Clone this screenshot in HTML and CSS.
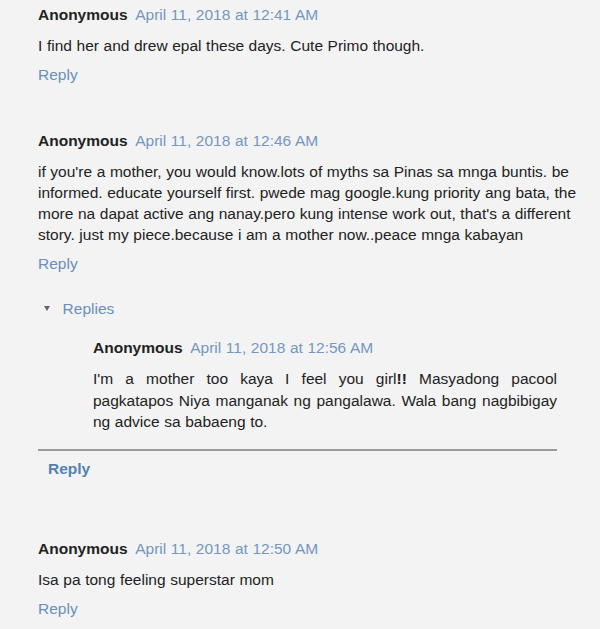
FILE: index.html
```html
<!DOCTYPE html>
<html lang="en">

<head>
  <title>Comments</title>
  <meta charset="utf-8">
  <meta name="viewport" content="width=device-width, initial-scale=1">
  <link rel="stylesheet" href="styles.css">
</head>

<body>
  <div class="comments">
    <!-- First comment -->
    <div class="comment">
      <div class="comment-header">
        <span class="author">Anonymous</span>
        <a class="date" href="#">April 11, 2018 at 12:41 AM</a>
      </div>
      <p class="comment-body">I find her and drew epal these days. Cute Primo though.</p>
      <a class="reply" href="#">Reply</a>
    </div>

    <!-- Second comment, with a thread -->
    <div class="comment second">
      <div class="comment-header">
        <span class="author">Anonymous</span>
        <a class="date" href="#">April 11, 2018 at 12:46 AM</a>
      </div>
      <p class="comment-body">if you're a mother, you would know.lots of myths sa Pinas sa mnga buntis. be informed. educate yourself first. pwede mag google.kung priority ang bata, the more na dapat active ang nanay.pero kung intense work out, that's a different story. just my piece.because i am a mother now..peace mnga kabayan</p>
      <a class="reply" href="#">Reply</a>
    </div>

    <div class="thread">
      <div class="toggle">
        <span class="arrow"></span>
        <a href="#">Replies</a>
      </div>
      <div class="replies">
        <div class="comment nested">
          <div class="comment-header">
            <span class="author">Anonymous</span>
            <a class="date" href="#">April 11, 2018 at 12:56 AM</a>
          </div>
          <p class="comment-body">I'm a mother too kaya I feel you girl<b>!!</b> Masyadong pacool pagkatapos Niya manganak ng pangalawa. Wala bang nagbibigay ng advice sa babaeng to.</p>
        </div>
      </div>
      <div class="continue">
        <a href="#">Reply</a>
      </div>
    </div>

    <!-- Third comment -->
    <div class="comment third">
      <div class="comment-header">
        <span class="author">Anonymous</span>
        <a class="date" href="#">April 11, 2018 at 12:50 AM</a>
      </div>
      <p class="comment-body">Isa pa tong feeling superstar mom</p>
      <a class="reply" href="#">Reply</a>
    </div>
  </div>
</body>

</html>
```

FILE: styles.css
```css
* {
  box-sizing: border-box;
}

body {
  margin: 0;
  background-color: #f3f3f3;
  color: #222222;
  font-family: "Liberation Sans", Arial, sans-serif;
  font-size: 15.5px;
  word-spacing: 0.3px;
}

a {
  text-decoration: none;
}

/* Comment list */
.comments {
  padding: 5px 17px 0 38px;
}

.comment-header {
  line-height: 20px;
}

.author {
  font-weight: bold;
  color: #222222;
}

.date {
  color: #7597bf;
  margin-left: 3px;
}

.comment-body {
  margin: 10px 0 0;
  line-height: 21px;
}

.reply {
  display: block;
  margin-top: 9px;
  line-height: 20px;
  color: #6a8fb8;
}

.comment.second {
  margin-top: 46px;
}

.comment.third {
  margin-top: 60px;
}

/* Thread of replies */
.thread {
  margin-top: 25px;
  width: 519px;
}

.toggle {
  line-height: 20px;
  padding-left: 6px;
}

.toggle a {
  color: #6a8fb8;
}

.arrow {
  display: inline-block;
  width: 0;
  height: 0;
  border-left: 3.5px solid transparent;
  border-right: 3.5px solid transparent;
  border-top: 5px solid #666666;
  margin-right: 8px;
  vertical-align: 3px;
}

.replies {
  margin-top: 19px;
  padding-left: 55px;
}

.comment.nested .comment-body {
  line-height: 21.5px;
  text-align: justify;
}

.comment-body b {
  font-weight: bold;
}

.continue {
  margin-top: 16px;
  border-top: 2px solid #999999;
  padding: 8px 0 0 10px;
  line-height: 20px;
}

.continue a {
  font-weight: bold;
  color: #5382ae;
}
```
